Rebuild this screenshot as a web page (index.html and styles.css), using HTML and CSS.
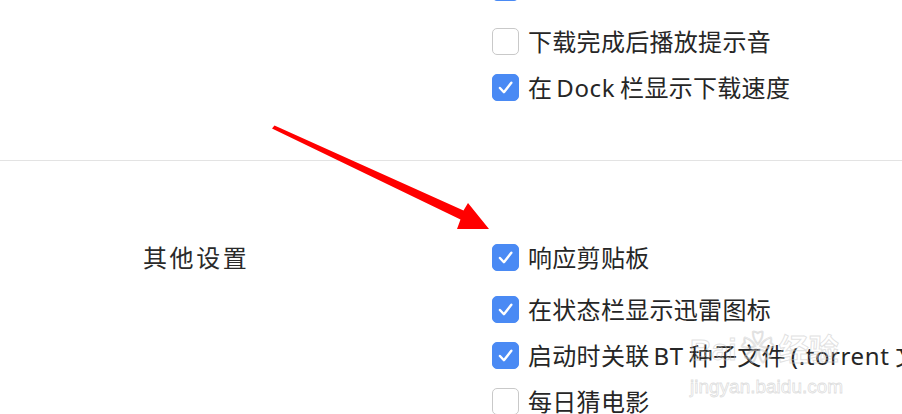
FILE: index.html
```html
<!DOCTYPE html>
<html lang="zh-CN">
<head>
<meta charset="utf-8">
<title>设置</title>
<link rel="stylesheet" href="styles.css">
</head>
<body>
<div class="page">
  <section class="section section-top">
    <div class="label"></div>
    <div class="options">
      <div class="group group-prev">
        <div class="row"><span class="cb on"><svg viewBox="0 0 27 27"><path d="M7.5 14 L11.8 18.6 L19.8 8.4"/></svg></span><span class="text">显示下载完成通知</span></div>
      </div>
      <div class="group">
        <div class="row"><span class="cb"></span><span class="text">下载完成后播放提示音</span></div>
        <div class="row"><span class="cb on"><svg viewBox="0 0 27 27"><path d="M7.5 14 L11.8 18.6 L19.8 8.4"/></svg></span><span class="text">在<span class="lat">Dock</span>栏显示下载速度</span></div>
      </div>
    </div>
  </section>
  <section class="section section-other">
    <div class="label">其他设置</div>
    <div class="options">
      <div class="row first"><span class="cb on"><svg viewBox="0 0 27 27"><path d="M7.5 14 L11.8 18.6 L19.8 8.4"/></svg></span><span class="text">响应剪贴板</span></div>
      <div class="row"><span class="cb on"><svg viewBox="0 0 27 27"><path d="M7.5 14 L11.8 18.6 L19.8 8.4"/></svg></span><span class="text">在状态栏显示迅雷图标</span></div>
      <div class="row"><span class="cb on"><svg viewBox="0 0 27 27"><path d="M7.5 14 L11.8 18.6 L19.8 8.4"/></svg></span><span class="text">启动时关联<span class="lat">BT</span>种子文件<span class="lat-open">(.torrent</span> 文件)</span></div>
      <div class="row"><span class="cb"></span><span class="text">每日猜电影</span></div>
    </div>
  </section>
  <div class="watermark">
    <div class="wm-logo">Bai<span class="paw">❀</span>经验</div>
    <div class="wm-url">jingyan.baidu.com</div>
  </div>
  <svg class="arrow" viewBox="0 0 902 414" width="902" height="414">
    <path d="M272 128.5 L274.5 125.5 L463.5 210.5 L468 203 L489 229 L457 229 L460.5 219.5 Z" fill="#ff0000"/>
  </svg>
</div>
</body>
</html>
```
FILE: styles.css
```css
html, body {
  margin: 0;
  padding: 0;
  background: #ffffff;
}
body {
  width: 902px;
  height: 414px;
  overflow: hidden;
  font-family: "Noto Sans CJK SC", "Noto Sans", sans-serif;
  color: #262626;
}
.page {
  position: relative;
  width: 902px;
  height: 414px;
  overflow: hidden;
}
.section {
  display: flex;
}
.label {
  width: 349px;
  padding-left: 143px;
  font-size: 24px;
  letter-spacing: 2.6px;
  line-height: 46px;
  color: #2a2a2a;
  flex: none;
}
.options {
  display: flex;
  flex-direction: column;
  flex: none;
  white-space: nowrap;
}
.section-top {
  margin-top: -36px;
  padding-bottom: 50px;
  border-bottom: 1px solid #e3e3e3;
}
.group-prev {
  margin-bottom: 8px;
}
.section-other {
  padding-top: 73px;
}
.section-other .row.first {
  margin-bottom: 6px;
}
.row {
  display: flex;
  align-items: center;
  height: 46px;
}
.cb {
  width: 27px;
  height: 27px;
  box-sizing: border-box;
  border-radius: 5px;
  border: 1px solid #c9c9c9;
  background: #ffffff;
  flex: none;
  display: flex;
}
.cb.on {
  background: #4a8af4;
  border-color: #4a8af4;
}
.cb svg {
  width: 25px;
  height: 25px;
}
.cb svg path {
  fill: none;
  stroke: #ffffff;
  stroke-width: 2.6;
  stroke-linecap: round;
  stroke-linejoin: round;
}
.text {
  margin-left: 9px;
  font-size: 24px;
  letter-spacing: 0.3px;
  line-height: 46px;
}
.lat {
  font-family: "Noto Sans", sans-serif;
  margin: 0 5px 0 4px;
  letter-spacing: 0.6px;
}
.lat-open {
  font-family: "Noto Sans", sans-serif;
  margin-left: 5px;
  letter-spacing: 0.6px;
}
.watermark {
  position: absolute;
  left: 690px;
  top: 330px;
  color: rgba(205, 205, 205, 0.45);
  pointer-events: none;
}
.wm-logo {
  font-family: "Liberation Sans", "Noto Sans CJK SC", sans-serif;
  font-size: 30px;
  font-weight: bold;
  line-height: 36px;
  color: transparent;
  -webkit-text-stroke: 1px rgba(200, 200, 200, 0.55);
}
.paw {
  font-size: 34px;
  margin: 0 4px;
}
.wm-url {
  font-family: "Liberation Sans", sans-serif;
  font-size: 19px;
  line-height: 22px;
  margin-top: 8px;
  color: transparent;
  -webkit-text-stroke: 0.8px rgba(200, 200, 200, 0.6);
}
.arrow {
  position: absolute;
  left: 0;
  top: 0;
}
```
